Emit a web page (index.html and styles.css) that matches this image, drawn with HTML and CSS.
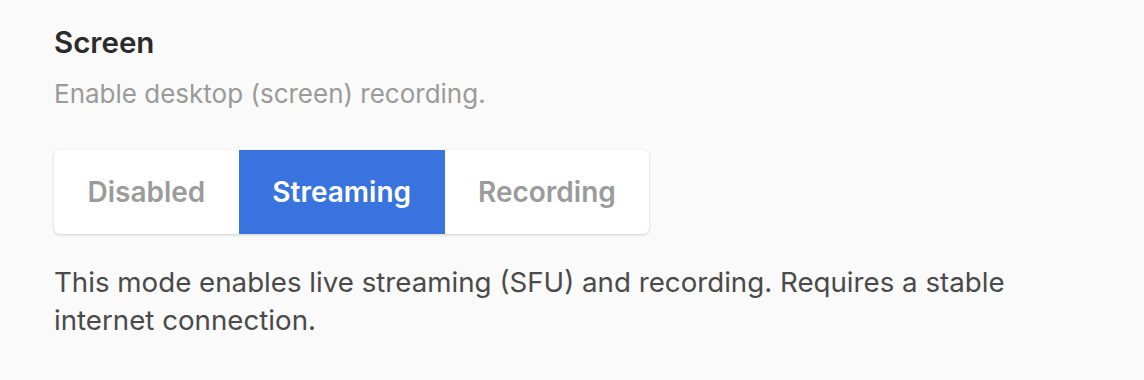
FILE: index.html
```html
<!DOCTYPE html>
<html lang="en">
<head>
  <meta charset="UTF-8" />
  <title>Screen</title>
  <link rel="stylesheet" href="styles.css">
</head>
<body>
  <div class="setting">
    <div class="setting-title">Screen</div>
    <div class="setting-description">Enable desktop (screen) recording.</div>

    <div class="mode-switch">
      <div class="mode-option">Disabled</div>
      <div class="mode-option active">Streaming</div>
      <div class="mode-option">Recording</div>
    </div>

    <p class="mode-info">This mode enables live streaming (SFU) and recording. Requires a stable internet connection.</p>
  </div>
</body>
</html>
```

FILE: styles.css
```css
* {
  box-sizing: border-box;
}

body {
  margin: 0;
  background: #fafafa;
  font-family: Inter, 'Noto Sans', sans-serif;
  color: #333;
}

.setting {
  padding: 24px 54px;
}

.setting-title {
  font-size: 29.5px;
  font-weight: 600;
  line-height: 36px;
  color: #2b2b2b;
}

.setting-description {
  margin-top: 18px;
  font-size: 26px;
  line-height: 32px;
  color: #9a9a9a;
}

.mode-switch {
  display: inline-flex;
  margin-top: 40px;
  height: 84px;
  background: #fff;
  border-radius: 6px;
  box-shadow: 0 1px 3px rgba(0, 0, 0, 0.18);
  overflow: hidden;
}

.mode-option {
  display: flex;
  align-items: center;
  justify-content: center;
  padding: 0 33.5px;
  font-size: 28px;
  font-weight: 600;
  color: #9b9b9b;
}

.mode-option.active {
  background: #3873e0;
  color: #fff;
}

.mode-info {
  margin: 29px 0 0;
  max-width: 1000px;
  font-size: 27.7px;
  line-height: 38px;
  color: #4a4a4a;
}
```
